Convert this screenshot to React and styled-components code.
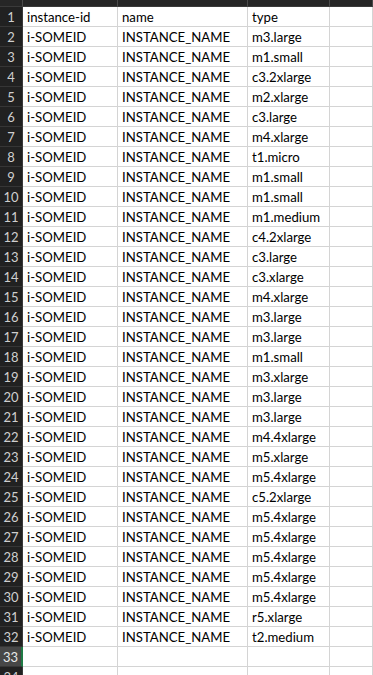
import React from "react";
import styled, { createGlobalStyle } from "styled-components";

const types = [
  "m3.large", "m1.small", "c3.2xlarge", "m2.xlarge", "c3.large", "m4.xlarge",
  "t1.micro", "m1.small", "m1.small", "m1.medium", "c4.2xlarge", "c3.large",
  "c3.xlarge", "m4.xlarge", "m3.large", "m3.large", "m1.small", "m3.xlarge",
  "m3.large", "m3.large", "m4.4xlarge", "m5.xlarge", "m5.4xlarge", "c5.2xlarge",
  "m5.4xlarge", "m5.4xlarge", "m5.4xlarge", "m5.4xlarge", "m5.4xlarge",
  "r5.xlarge", "t2.medium",
];

const GlobalStyle = createGlobalStyle`
  html, body {
    margin: 0;
    background: #ffffff;
    overflow: hidden;
  }
`;

const App = () => {
  return (
    <>
      <GlobalStyle />
      <Sheet>
        <ColumnBar>
          <ColHead $w={23} />
          <ColHead $w={95} />
          <ColHead $w={130} />
          <ColHead $w={82} />
          <ColHead $w={43} />
        </ColumnBar>
        <Row>
          <RowNum>1</RowNum>
          <Cell>instance-id</Cell>
          <Cell>name</Cell>
          <Cell>type</Cell>
          <Cell />
        </Row>
        {types.map((t, i) => (
          <Row key={i}>
            <RowNum>{i + 2}</RowNum>
            <Cell>i-SOMEID</Cell>
            <Cell>INSTANCE_NAME</Cell>
            <Cell>{t}</Cell>
            <Cell />
          </Row>
        ))}
        <Row>
          <RowNum $active>33</RowNum>
          <Cell />
          <Cell />
          <Cell />
          <Cell />
        </Row>
        <Row>
          <RowNum>34</RowNum>
          <Cell />
          <Cell />
          <Cell />
          <Cell />
        </Row>
      </Sheet>
    </>
  );
};

const Sheet = styled.div`
  width: 373px;
  height: 675px;
  overflow: hidden;
  font-family: Lato, "Open Sans", sans-serif;
  font-size: 12.7px;
  color: #000;
`;

const ColumnBar = styled.div`
  display: flex;
  height: 7px;
  background: #262626;
`;

const ColHead = styled.div`
  flex: 0 0 ${(p) => p.$w}px;
  box-sizing: border-box;
  border-right: 1px solid #4a4a4a;
  border-bottom: 1px solid #3a3a3a;
`;

const Row = styled.div`
  display: grid;
  grid-template-columns: 23px 95px 130px 82px 43px;
  height: 20px;
`;

const RowNum = styled.div`
  box-sizing: border-box;
  background: ${(p) => (p.$active ? "#474747" : "#212121")};
  color: ${(p) => (p.$active ? "#e8e8e8" : "#cfcfcf")};
  border-right: ${(p) => (p.$active ? "2px solid #1f7a45" : "1px solid #3a3a3a")};
  border-bottom: 1px solid #363636;
  display: flex;
  align-items: center;
  justify-content: center;
  font-size: 13px;
  line-height: 1;
  padding-top: 1px;
`;

const Cell = styled.div`
  box-sizing: border-box;
  border-right: 1px solid #d4d4d4;
  border-bottom: 1px solid #d4d4d4;
  padding: 1px 0 0 4px;
  display: flex;
  align-items: center;
  white-space: nowrap;
  overflow: hidden;
  font-size: 13.2px;
`;

export default App;
